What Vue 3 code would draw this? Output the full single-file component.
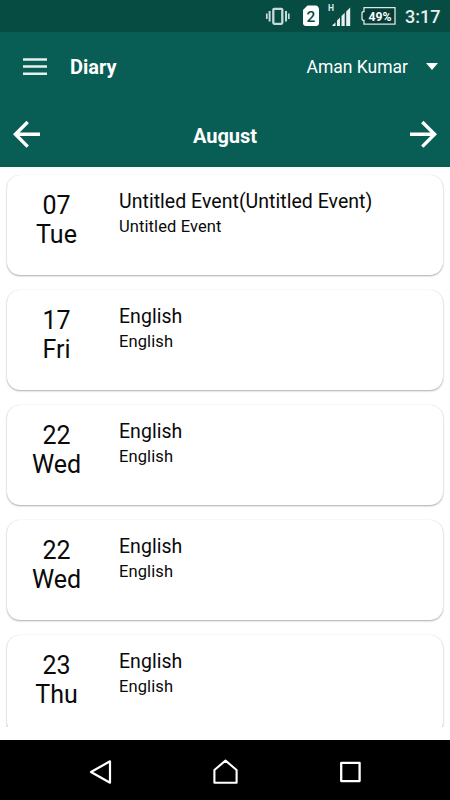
<template>
  <div class="screen">
    <div class="status-bar">
      <svg class="status-icons" width="136" height="32" viewBox="0 0 136 32">
        <!-- vibrate -->
        <g fill="none" stroke="#c8dad7">
          <rect x="8.300" y="8.800" width="9" height="15" rx="1" stroke-width="2.300" />
          <path d="M4.600 11v10.500M21 11v10.500" stroke-width="2" />
          <path d="M1.800 13.500v5.500M23.800 13.500v5.500" stroke-width="1.700" />
        </g>
        <!-- sim -->
        <path d="M42.500 5.500h8.500q2 0 3 3v14.500q0 3-3 3h-10q-3 0-3-3v-13z" fill="#fff" />
        <text x="45.800" y="22" text-anchor="middle" font-size="15.500" font-weight="500" fill="#074c43">2</text>
        <!-- signal -->
        <text x="66" y="10.800" text-anchor="middle" font-size="8.500" font-weight="700" fill="#dbe7e5">H</text>
        <path d="M67.500 26v-1l3-2.600v3.600zM72 26v-5.500l3-3v8.500zM76.500 26v-10l3.200-3.200v13.200zM81.200 26v-14.500l4-4v18.500z" fill="#e9f0ef" />
        <!-- battery -->
        <path d="M99 7.700h31v16.400h-31v-3.600q-2 0-2-2v-5q0-2 2-2z" fill="#053b34" stroke="#dbe7e5" stroke-width="1.300" />
        <text x="115" y="20.600" text-anchor="middle" font-size="12.500" font-weight="700" textLength="23" lengthAdjust="spacingAndGlyphs" fill="#fff">49%</text>
      </svg>
      <span class="clock">3:17</span>
    </div>

    <header class="header">
      <div class="toolbar">
        <svg class="menu" width="24" height="18" viewBox="0 0 24 18">
          <path d="M0 1.500h24M0 8.600h24M0 15.700h24" stroke="#e6efee" stroke-width="2.500" />
        </svg>
        <h1 class="title">Diary</h1>
        <span class="user">Aman Kumar</span>
        <svg class="caret" width="12" height="7" viewBox="0 0 12 7">
          <path d="M0 0h12l-6 7z" fill="#fff" />
        </svg>
      </div>
      <div class="month-bar">
        <svg width="27" height="28" viewBox="0 0 27 28">
          <path d="M27 14.300H3M14.700 2L2.400 14.300l12.300 12.300" fill="none" stroke="#fff" stroke-width="3.400" />
        </svg>
        <span class="month">August</span>
        <svg width="27" height="28" viewBox="0 0 27 28">
          <path d="M0 14.300h24M12.300 2l12.300 12.300-12.300 12.300" fill="none" stroke="#fff" stroke-width="3.400" />
        </svg>
      </div>
    </header>

    <main class="list">
      <article v-for="(event, index) in events" :key="index" class="card">
        <div class="date">
          <div>{{ event.date }}</div>
          <div>{{ event.day }}</div>
        </div>
        <div class="info">
          <div class="name">{{ event.name }}</div>
          <div class="detail">{{ event.detail }}</div>
        </div>
      </article>
    </main>

    <nav class="nav-bar">
      <svg width="24" height="26" viewBox="0 0 24 26">
        <path d="M21 2.300v21.400L2 13z" fill="none" stroke="#fff" stroke-width="2.200" stroke-linejoin="round" />
      </svg>
      <svg width="26" height="26" viewBox="0 0 26 26">
        <path d="M1.400 23.800V11L12.500 1.600 23.600 11v12.800z" fill="none" stroke="#fff" stroke-width="2.100" stroke-linejoin="round" />
      </svg>
      <svg width="22" height="26" viewBox="0 0 22 26">
        <rect x="2.200" y="3.900" width="18.400" height="18.200" fill="none" stroke="#fff" stroke-width="2.300" stroke-linejoin="round" />
      </svg>
    </nav>
  </div>
</template>

<script setup>
const events = [
  { date: '07', day: 'Tue', name: 'Untitled Event(Untitled Event)', detail: 'Untitled Event' },
  { date: '17', day: 'Fri', name: 'English', detail: 'English' },
  { date: '22', day: 'Wed', name: 'English', detail: 'English' },
  { date: '22', day: 'Wed', name: 'English', detail: 'English' },
  { date: '23', day: 'Thu', name: 'English', detail: 'English' },
]
</script>

<style scoped>
.screen {
  display: flex;
  flex-direction: column;
  width: 450px;
  height: 800px;
  overflow: hidden;
  background: #fff;
  font-family: Roboto, 'Liberation Sans', sans-serif;
  color: #0a0a0a;
}

.status-bar {
  display: flex;
  flex: none;
  justify-content: flex-end;
  height: 32px;
  padding-right: 10px;
  background: #074c43;
}

.clock {
  width: 35px;
  margin-left: 4px;
  font-size: 18px;
  font-weight: 500;
  line-height: 33px;
  color: #e9f0ef;
  white-space: nowrap;
}

.header {
  flex: none;
  height: 135px;
  background: #085e54;
  color: #fff;
}

.toolbar {
  display: flex;
  align-items: center;
  height: 70px;
  padding: 0 12px 0 23px;
}

.title {
  margin: 0 0 0 23px;
  font-size: 20px;
  font-weight: 700;
  line-height: 24px;
}

.user {
  margin: 0 0 0 auto;
  font-size: 17.500px;
  line-height: 24px;
}

.caret {
  margin: -1px 0 0 18px;
}

.month-bar {
  display: flex;
  align-items: center;
  justify-content: space-between;
  height: 64px;
  padding: 0 13px;
}

.month {
  margin: 4px 0 0;
  font-size: 20px;
  font-weight: 700;
  line-height: 24px;
}

.list {
  display: flex;
  flex: none;
  flex-direction: column;
  gap: 15px;
  box-sizing: border-box;
  height: 560px;
  padding: 8px 7px 0;
  overflow: hidden;
}

.card {
  display: flex;
  flex: none;
  height: 100px;
  border-radius: 13px;
  background: #fff;
  box-shadow: 0 1px 2px rgba(0, 0, 0, 0.32), 0 0 1px rgba(0, 0, 0, 0.15);
}

.date {
  width: 99px;
  padding-top: 16px;
  font-size: 25px;
  line-height: 29px;
  text-align: center;
}

.info {
  padding: 14px 0 0 13px;
}

.name {
  font-size: 19.500px;
  line-height: 25px;
  letter-spacing: 0.03px;
}

.detail {
  font-size: 16.500px;
  line-height: 25px;
  letter-spacing: 0.1px;
}

.nav-bar {
  display: flex;
  flex: none;
  align-items: center;
  justify-content: space-between;
  box-sizing: border-box;
  height: 60px;
  margin-top: 13px;
  padding: 4px 89px 0;
  background: #000;
}
</style>
